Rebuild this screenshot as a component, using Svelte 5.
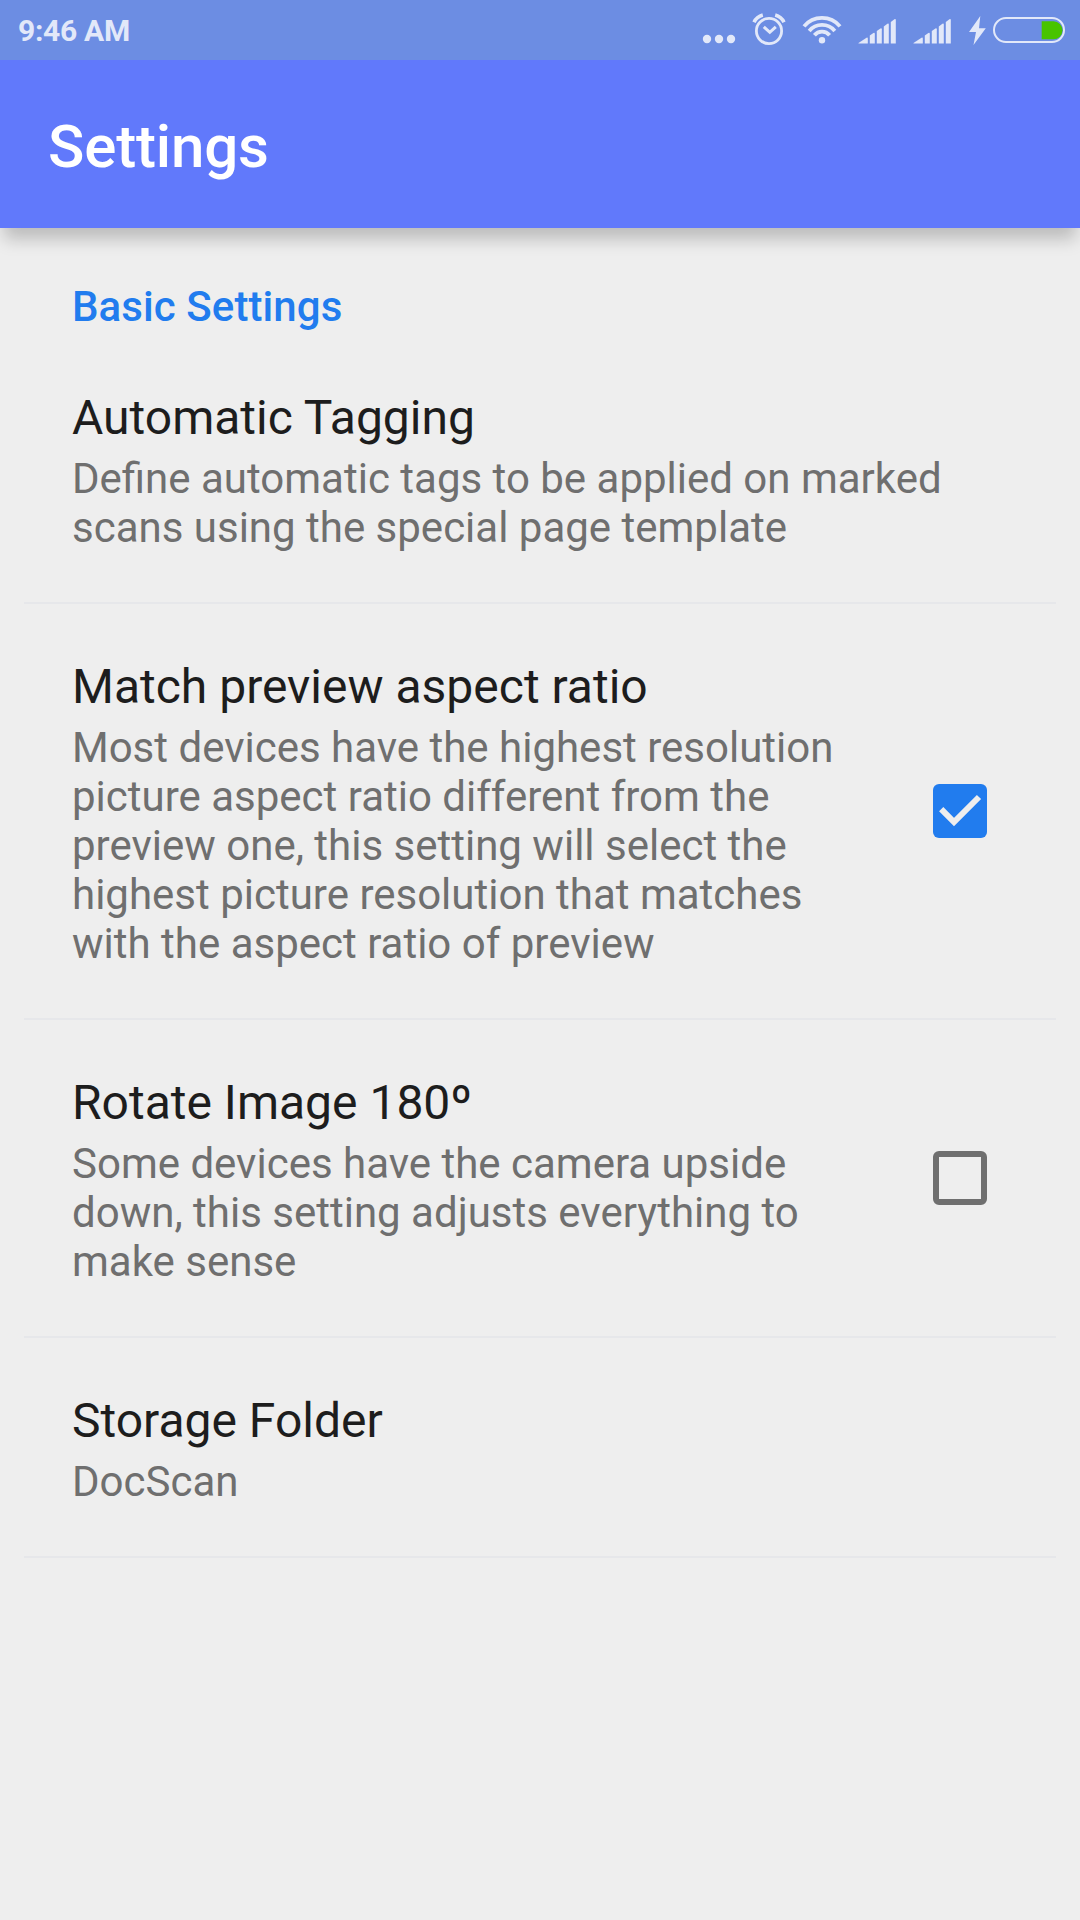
<script>
  const items = [
    {
      title: 'Automatic Tagging',
      text: 'Define automatic tags to be applied on marked scans using the special page template',
    },
    {
      title: 'Match preview aspect ratio',
      text: 'Most devices have the highest resolution picture aspect ratio different from the preview one, this setting will select the highest picture resolution that matches with the aspect ratio of preview',
      checked: true,
    },
    {
      title: 'Rotate Image 180º',
      text: 'Some devices have the camera upside down, this setting adjusts everything to make sense',
      checked: false,
    },
    { title: 'Storage Folder', text: 'DocScan' },
  ];
</script>

{#snippet signal()}
  <svg class="signal" width="38" height="26" viewBox="0 0 38 26" fill="currentColor">
    <path d="M0.5 25.5 L0.5 25 L8.5 19.8 Q9.8 19.2 9.8 20.5 V25.5Z" />
    <path d="M11.8 25.5 V17.6 L15.4 15 Q16.8 14.3 16.8 15.8 V25.5Z" />
    <path d="M18.8 25.5 V13 L22.4 10.4 Q23.8 9.7 23.8 11.2 V25.5Z" />
    <path d="M25.8 25.5 V8.5 L29.4 5.8 Q30.8 5.1 30.8 6.6 V25.5Z" />
    <path d="M32.8 25.5 V4 L36.4 1.2 Q37.8 0.5 37.8 2 V25.5Z" />
  </svg>
{/snippet}

<div class="screen">
  <header>
    <div class="status">
      <span class="time">9:46 AM</span>
      <div class="icons">
        <svg class="dots" width="34" height="10" viewBox="0 0 34 10" fill="currentColor">
          <circle cx="5" cy="5" r="4.2" /><circle cx="17" cy="5" r="4.2" /><circle cx="29" cy="5" r="4.2" />
        </svg>
        <svg class="alarm" width="34" height="34" viewBox="752 12 34 34" fill="none" stroke="currentColor">
          <circle cx="769" cy="31" r="12.6" stroke-width="2.8" />
          <path d="M763.8 26.8 L769.8 32.3 L775.8 26.8" stroke-width="3" />
          <path d="M754 22.2 Q756.8 16.6 762.8 15M784 22.2 Q781.2 16.6 775.2 15" stroke-width="3.6" />
        </svg>
        <svg class="wifi" width="40" height="30" viewBox="802 15 40 30" fill="none" stroke="currentColor" stroke-width="3.8">
          <circle cx="822" cy="40.2" r="3.2" fill="currentColor" stroke="none" />
          <path d="M804 26.4 A23.4 23.4 0 0 1 840 26.4M809.2 31 A16.6 16.6 0 0 1 834.8 31M814.4 35.3 A9.8 9.8 0 0 1 829.6 35.3" />
        </svg>
        {@render signal()}
        {@render signal()}
        <svg class="bolt" width="18" height="30" viewBox="968 15 18 30" fill="currentColor">
          <path d="M980.3 16 L969 32 H976 L973.5 45 L985.8 28.2 H979Z" />
        </svg>
        <svg class="battery" width="72" height="26" viewBox="0 0 72 26">
          <rect x="1" y="1" width="70" height="24" rx="12" fill="none" stroke="currentColor" stroke-width="2" />
          <path class="charge" d="M48.7 4.3 H60.5 A9 9 0 0 1 60.5 22.3 H48.7Z" />
        </svg>
      </div>
    </div>
    <div class="toolbar"><h1>Settings</h1></div>
  </header>

  <main>
    <h2>Basic Settings</h2>
    {#each items as item}
      <section class="item">
        <div class="copy" class:narrow={item.checked !== undefined}>
          <h3>{item.title}</h3>
          <p>{item.text}</p>
        </div>
        {#if item.checked !== undefined}
          <div class="box" class:checked={item.checked} role="checkbox" aria-checked={item.checked} aria-label={item.title} tabindex="0">
            {#if item.checked}
              <svg width="54" height="54" viewBox="0 0 54 54" fill="none">
                <path d="M8.2 25.2 L21 38 L46 13" stroke="#eee" stroke-width="6" />
              </svg>
            {/if}
          </div>
        {/if}
      </section>
    {/each}
  </main>
</div>

<style>
  :global(body) {
    margin: 0;
    background: #eee;
  }
  .screen {
    width: 1080px;
    height: 1920px;
    overflow: hidden;
    background: #eee;
    font-family: Roboto, sans-serif;
  }
  h1, h2, h3, p {
    margin: 0;
  }
  header {
    height: 228px;
    background: #6179fb;
    box-shadow: 0 15px 16px -4px rgba(0, 0, 0, 0.21);
  }
  .status {
    display: flex;
    justify-content: space-between;
    height: 60px;
    padding: 0 15px 0 18px;
    background: #6c8de3;
    color: #e2e8f9;
  }
  .time {
    font-size: 30px;
    font-weight: 700;
    letter-spacing: -0.3px;
    line-height: 61px;
  }
  .icons {
    display: flex;
    align-items: flex-start;
  }
  svg {
    display: block;
    flex: none;
  }
  .dots { margin-top: 34px; }
  .alarm { margin: 12px 0 0 16px; }
  .wifi { margin: 15px 0 0 16px; }
  .signal { margin: 17.5px 0 0 16px; }
  .signal + .signal { margin-left: 17px; }
  .bolt { margin: 15px 0 0 17px; }
  .battery { margin: 17px 0 0 7px; }
  .charge { fill: #48c400; }
  .toolbar {
    display: flex;
    align-items: center;
    box-sizing: border-box;
    height: 168px;
    padding: 5px 48px 0;
  }
  h1 {
    color: #fff;
    font-size: 60px;
    font-weight: 500;
    letter-spacing: -0.15px;
    line-height: 70px;
  }
  main {
    padding: 0 24px;
  }
  h2 {
    box-sizing: border-box;
    height: 107px;
    padding: 54px 48px 0;
    color: #217cee;
    font-size: 42px;
    font-weight: 500;
    letter-spacing: 0.08px;
    line-height: 49px;
  }
  .item {
    display: flex;
    align-items: center;
    justify-content: space-between;
    box-sizing: border-box;
    padding: 55px 69px 50px 48px;
    border-bottom: 2px solid #e6e7ea;
  }
  .copy.narrow {
    width: 790px;
  }
  h3 {
    margin-bottom: 8px;
    color: #1d1d1d;
    font-size: 48px;
    font-weight: 400;
    line-height: 56px;
  }
  p {
    color: #6f6f6f;
    font-size: 42px;
    line-height: 49px;
  }
  .box {
    box-sizing: border-box;
    width: 54px;
    height: 54px;
    margin-bottom: 5px;
    border: 6px solid #6f6f6f;
    border-radius: 6px;
  }
  .box.checked {
    border: 0;
    background: #217cee;
  }
</style>
